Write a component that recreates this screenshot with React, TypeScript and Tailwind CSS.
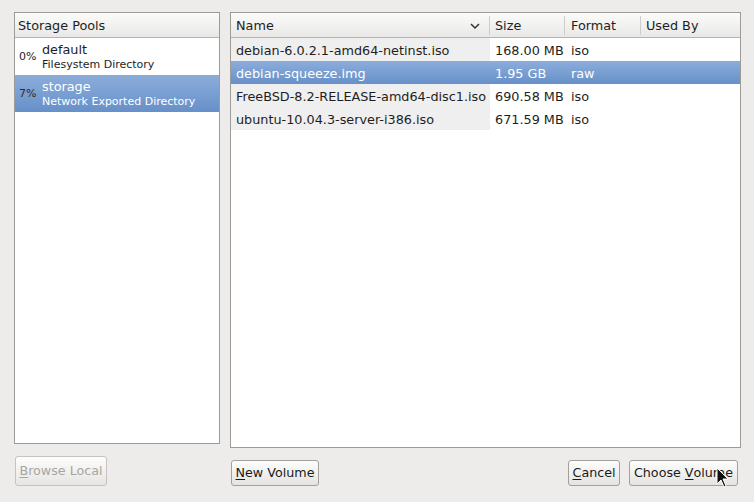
import React from 'react';

const pools = [
  { pct: '0%', name: 'default', kind: 'Filesystem Directory', selected: false },
  { pct: '7%', name: 'storage', kind: 'Network Exported Directory', selected: true },
];

const volumes = [
  { name: 'debian-6.0.2.1-amd64-netinst.iso', size: '168.00 MB', format: 'iso', selected: false },
  { name: 'debian-squeeze.img', size: '1.95 GB', format: 'raw', selected: true },
  { name: 'FreeBSD-8.2-RELEASE-amd64-disc1.iso', size: '690.58 MB', format: 'iso', selected: false },
  { name: 'ubuntu-10.04.3-server-i386.iso', size: '671.59 MB', format: 'iso', selected: false },
];

const btn =
  'h-[26px] px-[5px] rounded-[3px] border border-[#a3a09b] bg-gradient-to-b from-[#fdfdfc] to-[#e4e3e1] text-[12.7px] text-[#1a1a1a] leading-none flex items-center justify-center whitespace-nowrap';

const App: React.FC = () => {
  return (
    <div
      className="relative w-[754px] h-[502px] bg-[#edeceb] text-[#1e1e1e] flex pt-3 pl-[14px] gap-[10px]"
      style={{ fontFamily: '"DejaVu Sans", sans-serif' }}
    >
      {/* Left column */}
      <div className="w-[206px] flex flex-col">
        <div className="h-[432px] border border-[#9e9b97] bg-white flex flex-col">
          <div className="h-[25px] border-b border-[#b6b3ae] bg-gradient-to-b from-[#fbfbfa] to-[#e9e8e6] text-[12.8px] flex items-center pl-[3px] pt-[1px]">
            Storage Pools
          </div>
          {pools.map((p) => (
            <div
              key={p.name}
              className={`h-[37px] flex items-center pl-1 pt-[1px] ${
                p.selected ? 'bg-gradient-to-b from-[#8caddb] to-[#6790c9]' : ''
              }`}
            >
              <span className={`w-[23px] text-[11px] ${p.selected ? 'text-[#2c2c2c]' : 'text-[#222]'}`}>{p.pct}</span>
              <div className={`flex flex-col ${p.selected ? 'text-white' : ''}`}>
                <span className="text-[12.8px] leading-[16px]">{p.name}</span>
                <span className="text-[11px] leading-[14px]">{p.kind}</span>
              </div>
            </div>
          ))}
        </div>
        <div className="mt-[12px] ml-[1px]">
          <button className={`${btn} h-[30px] w-[92px] text-[#a7a5a2] border-[#c5c3bf] from-[#f3f2f1] to-[#e6e5e3]`}>
            <span className="underline underline-offset-2">B</span>rowse Local
          </button>
        </div>
      </div>

      {/* Right column */}
      <div className="w-[511px] flex flex-col">
        <div className="h-[436px] border border-[#9e9b97] bg-white flex flex-col">
          <div className="h-[25px] border-b border-[#b6b3ae] bg-gradient-to-b from-[#fbfbfa] to-[#e9e8e6] text-[12.8px] flex items-center">
            <div className="w-[259px] h-[19px] flex items-center pl-[5px] pr-2 justify-between border-r border-[#cfcdc9] pt-[2px]">
              <span>Name</span>
              <svg width="10" height="8" viewBox="0 0 10 8" className="mr-[1px]">
                <path d="M1 2 L5 6 L9 2" stroke="#333" strokeWidth="1.5" fill="none" />
              </svg>
            </div>
            <div className="w-[75px] h-[19px] flex items-center pl-[5px] border-r border-[#cfcdc9] pt-[2px]">Size</div>
            <div className="w-[76px] h-[19px] flex items-center pl-[6px] border-r border-[#cfcdc9] pt-[2px]">Format</div>
            <div className="flex-1 h-[19px] flex items-center pl-[5px] pt-[2px]">Used By</div>
          </div>
          {volumes.map((v) => (
            <div
              key={v.name}
              className={`h-[23px] flex items-center text-[12.8px] ${
                v.selected ? 'bg-gradient-to-b from-[#8caddb] to-[#6790c9] text-white' : ''
              }`}
            >
              <div className={`w-[259px] h-full flex items-center pl-[5px] pt-[2px] ${v.selected ? '' : 'bg-[#efefef]'}`}>
                {v.name}
              </div>
              <div className="w-[75px] pl-[5px] pt-[2px]">{v.size}</div>
              <div className="w-[76px] pl-[6px] pt-[2px]">{v.format}</div>
              <div className="flex-1" />
            </div>
          ))}
        </div>
        <div className="mt-[12px] flex items-center">
          <button className={`${btn} w-[88px] ml-[1px]`}>
            <span className="underline underline-offset-2">N</span>ew Volume
          </button>
          <div className="flex-1" />
          <button className={`${btn} w-[52px]`}>
            <span className="underline underline-offset-2">C</span>ancel
          </button>
          <button className={`${btn} w-[109px] ml-[9px] mr-[3px]`}>
            Choose&nbsp;<span className="underline underline-offset-2">V</span>olume
          </button>
        </div>
      </div>

      {/* Mouse cursor */}
      <svg width="14" height="22" viewBox="0 0 14 22" className="absolute left-[716px] top-[467px]">
        <path d="M1 1 L1 17 L5 13 L8 20 L10 19 L7 12 L12 12 Z" fill="#111" stroke="#fff" strokeWidth="1" />
      </svg>
    </div>
  );
};

export default App;
